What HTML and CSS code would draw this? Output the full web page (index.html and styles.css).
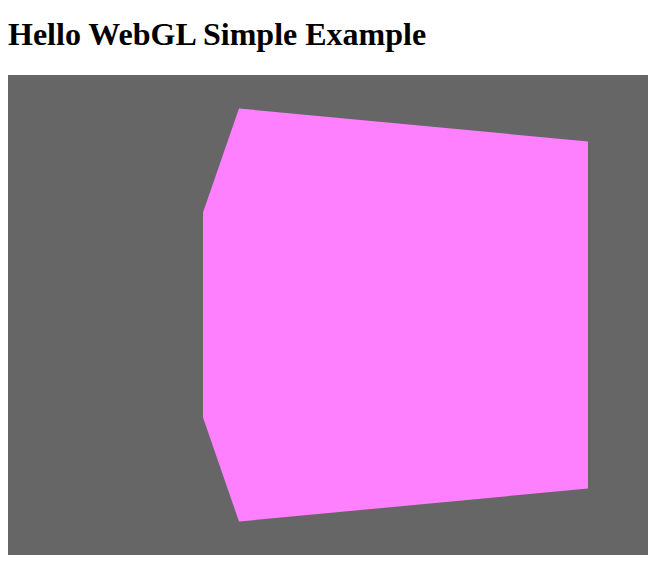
FILE: index.html
```html
<!DOCTYPE html>
<html>
<head>
<meta charset="utf-8">
<title>Hello WebGL Simple Example</title>
<link rel="stylesheet" href="styles.css">
</head>
<body>
<h1 class="title">Hello WebGL Simple Example</h1>
<div class="canvas">
<svg class="scene" width="640" height="480" viewBox="0 0 640 480">
<polygon points="231,33.5 580,66.5 580,413.5 231,446.5 195,342.5 195,137.5" fill="#ff80ff"/>
</svg>
</div>
</body>
</html>
```

FILE: styles.css
```css
html, body {
  margin: 0;
  padding: 0;
  background: #ffffff;
}
body {
  padding: 8px;
  font-family: "Liberation Serif", "Times New Roman", serif;
}
.title {
  font-size: 32px;
  font-weight: bold;
  margin: 8px 0 0 0;
  height: 59px;
  line-height: 37px;
  color: #000;
}
.canvas {
  width: 640px;
  height: 480px;
  background: #666666;
}
.scene {
  display: block;
}
```
